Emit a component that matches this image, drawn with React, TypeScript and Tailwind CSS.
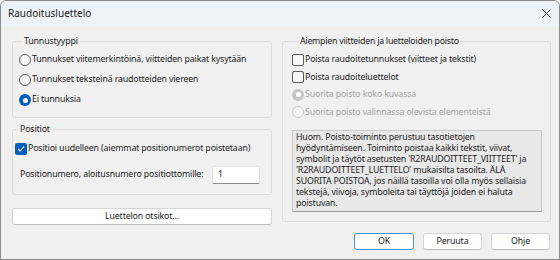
import React from 'react';

const font = { fontFamily: '"Noto Sans", "Open Sans", sans-serif' };

const Radio: React.FC<{ checked?: boolean; disabled?: boolean }> = ({ checked, disabled }) => {
  if (checked) {
    return (
      <span className={`flex h-[12px] w-[12px] shrink-0 items-center justify-center rounded-full ${disabled ? 'bg-[#c6c6c6]' : 'bg-[#005fb8]'}`}>
        <span className="h-[5px] w-[5px] rounded-full bg-white" />
      </span>
    );
  }
  return (
    <span className={`h-[12px] w-[12px] shrink-0 rounded-full border ${disabled ? 'border-[#cdcdcd] bg-[#f5f5f5]' : 'border-[#5c5c5c] bg-[#f7f7f7]'}`} />
  );
};

const Checkbox: React.FC<{ checked?: boolean }> = ({ checked }) =>
  checked ? (
    <span className="flex h-[12px] w-[12px] shrink-0 items-center justify-center rounded-[2px] bg-[#005fb8]">
      <svg width="8" height="8" viewBox="0 0 8 8" fill="none">
        <path d="M1.2 4.2 L3.1 6 L6.8 1.8" stroke="white" strokeWidth="1.1" strokeLinecap="round" strokeLinejoin="round" />
      </svg>
    </span>
  ) : (
    <span className="h-[12px] w-[12px] shrink-0 rounded-[2px] border border-[#5c5c5c] bg-[#f7f7f7]" />
  );

const DlgButton: React.FC<{ label: string; primary?: boolean; className?: string }> = ({ label, primary, className = '' }) => (
  <button
    className={`flex h-[17px] items-center justify-center rounded-[3px] border bg-white text-[8.8px] tracking-[-0.15px] text-[#1b1b1b] ${primary ? 'border-[#4a8fd6]' : 'border-[#d5d5d5] border-b-[#bcbcbc]'} ${className}`}
  >
    {label}
  </button>
);

const App: React.FC = () => {
  return (
    <div style={font} className="flex h-[260px] w-[560px] flex-col overflow-hidden whitespace-nowrap rounded-t-[6px] border border-[#8a8a8a] bg-[#f0f0f0] text-[8.8px] tracking-[-0.15px] text-[#1b1b1b]">
      {/* title bar */}
      <div className="flex h-[25px] shrink-0 items-center justify-between bg-[#eef3f9] pl-[7px] pr-[8px]">
        <span className="text-[10px] tracking-normal">Raudoitusluettelo</span>
        <svg width="9" height="9" viewBox="0 0 9 9">
          <path d="M0.5 0.5 L8.5 8.5 M8.5 0.5 L0.5 8.5" stroke="#333" strokeWidth="1" />
        </svg>
      </div>

      {/* body */}
      <div className="flex flex-1 flex-col pl-[11px] pr-[9px] pt-[8px]">
        <div className="flex gap-[10px]">
          {/* left column */}
          <div className="flex w-[260px] flex-col">
            <fieldset className="h-[84px] rounded-[3px] border border-[#dcdcdc] pl-[6px]">
              <legend className="ml-[4px] px-[1px] leading-[14px]">Tunnustyyppi</legend>
              <div className="flex flex-col pt-[2px]">
                <label className="flex h-[20px] items-center gap-[1px]">
                  <Radio />
                  <span>Tunnukset viitemerkintöinä, viitteiden paikat kysytään</span>
                </label>
                <label className="flex h-[20px] items-center gap-[1px]">
                  <Radio />
                  <span>Tunnukset teksteinä raudotteiden viereen</span>
                </label>
                <label className="flex h-[20px] items-center gap-[1px]">
                  <Radio checked />
                  <span>Ei tunnuksia</span>
                </label>
              </div>
            </fieldset>

            <fieldset className="mt-[4px] h-[73px] rounded-[3px] border border-[#dcdcdc] pl-[2px]">
              <legend className="ml-[4px] px-[1px] leading-[14px]">Positiot</legend>
              <label className="mt-[5px] flex h-[16px] items-center gap-[1px]">
                <Checkbox checked />
                <span>Positioi uudelleen (aiemmat positionumerot poistetaan)</span>
              </label>
              <div className="mt-[9px] flex items-center justify-between pl-[5px] pr-[11px]">
                <span>Positionumero, aloitusnumero positiottomille:</span>
                <div className="flex h-[18px] w-[48px] items-center rounded-[2px] border border-[#e2e2e2] border-b-[#8a8a8a] bg-white pl-[5px]">
                  1
                </div>
              </div>
            </fieldset>

            <DlgButton label="Luettelon otsikot..." className="mt-[13px] w-[260px]" />
          </div>

          {/* right column */}
          <fieldset className="h-[188px] w-[268px] rounded-[3px] border border-[#dcdcdc] pl-[9px] pr-[8px]">
            <legend className="ml-[7px] px-[1px] leading-[14px] tracking-[-0.25px]">Aiempien viitteiden ja luetteloiden poisto</legend>
            <div className="flex flex-col pt-[3px]">
              <label className="flex h-[17.5px] items-center gap-[1px]">
                <Checkbox />
                <span>Poista raudoitetunnukset (viitteet ja tekstit)</span>
              </label>
              <label className="flex h-[17.5px] items-center gap-[1px]">
                <Checkbox />
                <span>Poista raudoiteluettelot</span>
              </label>
              <label className="flex h-[17.5px] items-center gap-[1px] text-[#a3a3a3]">
                <Radio checked disabled />
                <span>Suorita poisto koko kuvassa</span>
              </label>
              <label className="flex h-[17.5px] items-center gap-[1px] text-[#a3a3a3]">
                <Radio disabled />
                <span>Suorita poisto valinnassa olevista elementeistä</span>
              </label>
            </div>
            <div className="mt-[9px] h-[82px] w-[250px] border border-[#c8c8c8] border-b-[#9a9a9a] bg-[#e8e8e8] px-[3px] pt-[1px] leading-[11px]">
              Huom. Poisto-toiminto perustuu tasotietojen
              <br />
              hyödyntämiseen. Toiminto poistaa kaikki tekstit, viivat,
              <br />
              symbolit ja täytöt asetusten 'R2RAUDOITTEET_VIITTEET' ja
              <br />
              'R2RAUDOITTEET_LUETTELO' mukaisilta tasoilta. ÄLÄ
              <br />
              SUORITA POISTOA, jos näillä tasoilla voi olla myös sellaisia
              <br />
              tekstejä, viivoja, symboleita tai täyttöjä joiden ei haluta
              <br />
              poistuvan.
            </div>
          </fieldset>
        </div>

        <div className="mt-[8px] flex justify-end gap-[9px]">
          <DlgButton label="OK" primary className="w-[60px]" />
          <DlgButton label="Peruuta" className="w-[59px]" />
          <DlgButton label="Ohje" className="w-[59px]" />
        </div>
      </div>
    </div>
  );
};

export default App;
